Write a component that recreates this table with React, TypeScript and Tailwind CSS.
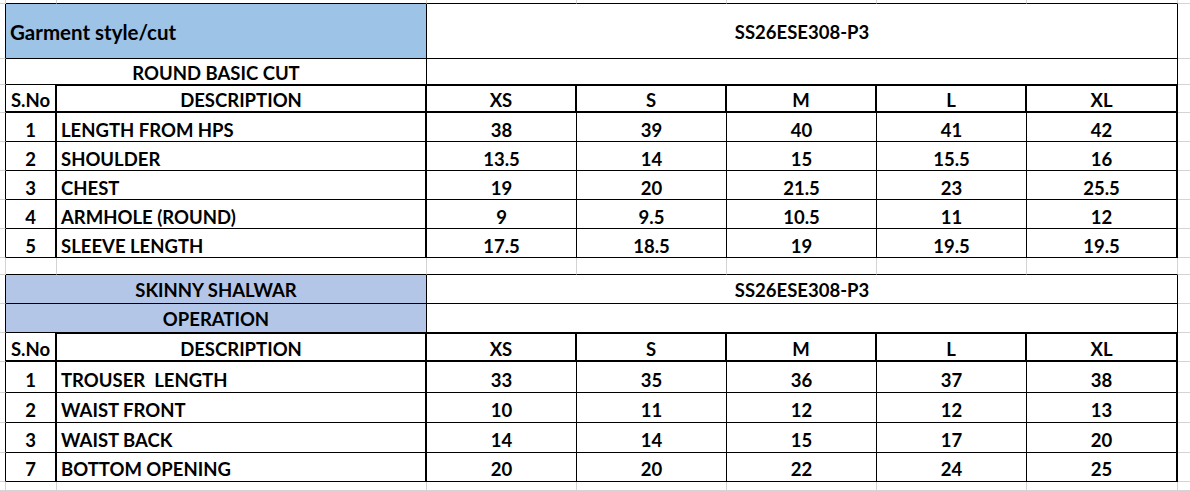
import React from 'react';

type Bd = 'g' | 'k' | 'K' | 'n';

const rightCls: Record<Bd, string> = {
  g: 'border-r border-r-[#d4d4d4]',
  k: 'border-r border-r-black',
  K: 'border-r-2 border-r-black',
  n: '',
};

const bottomCls: Record<Bd, string> = {
  g: 'border-b border-b-[#d4d4d4]',
  k: 'border-b border-b-black',
  K: 'border-b-2 border-b-black',
  n: '',
};

type CellProps = {
  r: Bd;
  b: Bd;
  top?: boolean;
  span?: string;
  bg?: string;
  align?: 'left' | 'center';
  v?: string;
  children?: React.ReactNode;
};

const Cell = ({ r, b, top, span = '', bg = 'bg-white', align = 'center', v = 'items-end pb-[2px]', children }: CellProps) => (
  <div
    className={`flex min-w-0 overflow-hidden whitespace-nowrap leading-none ${v} ${rightCls[r]} ${bottomCls[b]} ${
      top ? 'border-t border-t-black' : ''
    } ${span} ${bg} ${align === 'center' ? 'justify-center' : 'justify-start pl-[4px]'}`}
  >
    {children}
  </div>
);

const sizes = ['XS', 'S', 'M', 'L', 'XL'];

const shirtRows = [
  { no: '1', desc: 'LENGTH FROM HPS', vals: ['38', '39', '40', '41', '42'] },
  { no: '2', desc: 'SHOULDER', vals: ['13.5', '14', '15', '15.5', '16'] },
  { no: '3', desc: 'CHEST', vals: ['19', '20', '21.5', '23', '25.5'] },
  { no: '4', desc: 'ARMHOLE (ROUND)', vals: ['9', '9.5', '10.5', '11', '12'] },
  { no: '5', desc: 'SLEEVE LENGTH', vals: ['17.5', '18.5', '19', '19.5', '19.5'] },
];

const shalwarRows = [
  { no: '1', desc: 'TROUSER\u00a0 LENGTH', vals: ['33', '35', '36', '37', '38'] },
  { no: '2', desc: 'WAIST FRONT', vals: ['10', '11', '12', '12', '13'] },
  { no: '3', desc: 'WAIST BACK', vals: ['14', '14', '15', '17', '20'] },
  { no: '7', desc: 'BOTTOM OPENING', vals: ['20', '20', '22', '24', '25'] },
];

const GapRow = ({ tableBelow }: { tableBelow: boolean }) => {
  const b: Bd = tableBelow ? 'k' : 'g';
  return (
    <>
      <Cell r="g" b="g" />
      <Cell r="g" b={b} />
      <Cell r="g" b={b} />
      {sizes.map((s) => (
        <Cell key={s} r="g" b={b} />
      ))}
      <Cell r="n" b="g" />
    </>
  );
};

const HeaderRow = () => (
  <>
    <Cell r="k" b="g" />
    <Cell r="K" b="K">S.No</Cell>
    <Cell r="K" b="K" top>
      DESCRIPTION
    </Cell>
    {sizes.map((s) => (
      <Cell key={s} r="K" b="K" top>
        {s}
      </Cell>
    ))}
    <Cell r="n" b="g" />
  </>
);

const DataRow = ({ no, desc, vals, pb }: { no: string; desc: string; vals: string[]; pb: string }) => (
  <>
    <Cell r="k" b="g" />
    <Cell r="K" b="k" v={pb}>
      {no}
    </Cell>
    <Cell r="K" b="k" align="left" v={pb}>
      {desc}
    </Cell>
    {vals.map((x, i) => (
      <Cell key={i} r={i === 4 ? 'K' : 'k'} b="k" v={pb}>
        {x}
      </Cell>
    ))}
    <Cell r="n" b="g" />
  </>
);

export default function App() {
  return (
    <div className="w-[1190px] h-[491px] overflow-hidden bg-white text-black font-bold text-[18.5px] font-['Lato',sans-serif]">
      <div className="grid grid-cols-[6px_51px_370px_150px_150px_150px_150px_151px_1fr] grid-rows-[4px_55px_26px_28px_29px_29px_29px_29px_29px_17px_29px_29px_29px_31px_30px_30px_29px_9px]">
        <GapRow tableBelow />

        {/* shirt block */}
        <Cell r="k" b="g" />
        <Cell r="k" b="k" span="col-span-2" bg="bg-[#9dc3e6]" align="left" v="items-center pt-[2px] text-[20.5px]">
          Garment style/cut
        </Cell>
        <Cell r="k" b="k" span="col-span-5" v="items-center pt-[2px]">
          SS26ESE308-P3
        </Cell>
        <Cell r="n" b="g" />

        <Cell r="k" b="g" />
        <Cell r="k" b="k" span="col-span-2">
          ROUND BASIC CUT
        </Cell>
        <Cell r="k" b="k" span="col-span-5" />
        <Cell r="n" b="g" />

        <HeaderRow />
        {shirtRows.map((row) => (
          <DataRow key={row.desc} {...row} pb="items-end pb-[2px]" />
        ))}

        <GapRow tableBelow />

        {/* shalwar block */}
        <Cell r="k" b="g" />
        <Cell r="k" b="k" span="col-span-2" bg="bg-[#b4c6e7]" v="items-end pb-[4px]">
          SKINNY SHALWAR
        </Cell>
        <Cell r="k" b="k" span="col-span-5" v="items-end pb-[4px]">
          SS26ESE308-P3
        </Cell>
        <Cell r="n" b="g" />

        <Cell r="k" b="g" />
        <Cell r="k" b="k" span="col-span-2" bg="bg-[#b4c6e7]" v="items-end pb-[4px]">
          OPERATION
        </Cell>
        <Cell r="k" b="k" span="col-span-5" />
        <Cell r="n" b="g" />

        <HeaderRow />
        {shalwarRows.map((row) => (
          <DataRow key={row.desc} {...row} pb="items-end pb-[3px]" />
        ))}

        <GapRow tableBelow={false} />
      </div>
    </div>
  );
}
